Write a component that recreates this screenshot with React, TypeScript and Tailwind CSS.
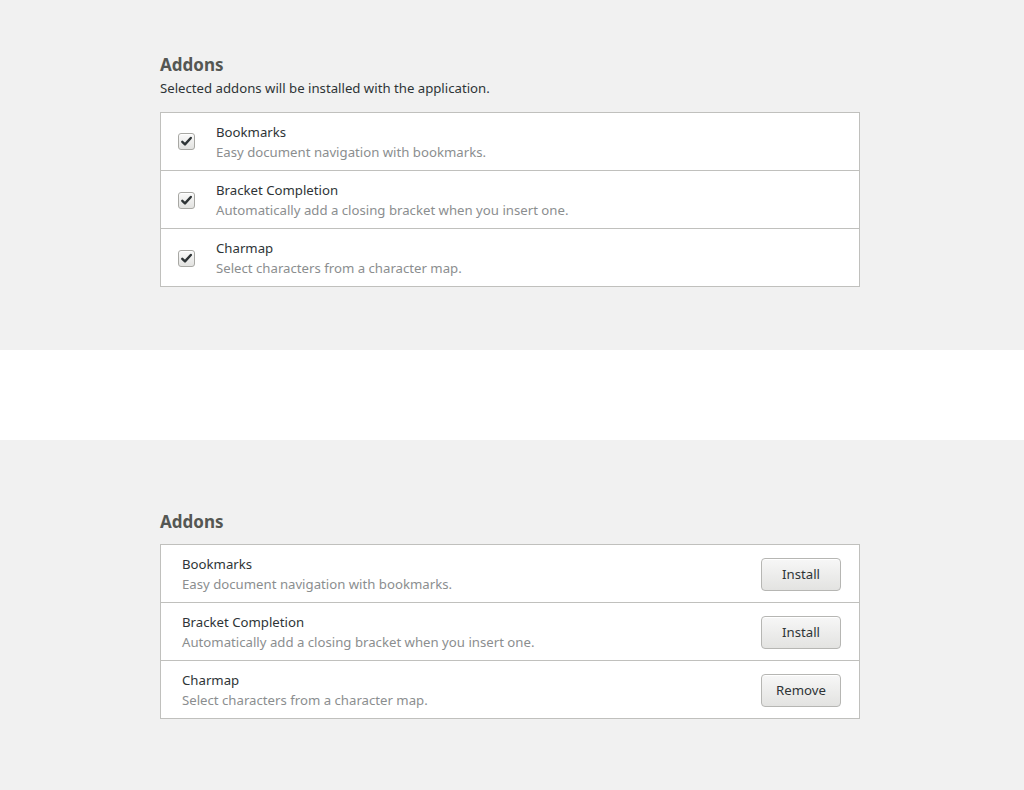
import React from 'react';

type Addon = { name: string; desc: string; action: string };

const addons: Addon[] = [
  { name: 'Bookmarks', desc: 'Easy document navigation with bookmarks.', action: 'Install' },
  { name: 'Bracket Completion', desc: 'Automatically add a closing bracket when you insert one.', action: 'Install' },
  { name: 'Charmap', desc: 'Select characters from a character map.', action: 'Remove' },
];

const Check: React.FC = () => (
  <span className="flex h-[17px] w-[17px] items-center justify-center rounded-[3px] border border-[#a8a8a4] bg-gradient-to-b from-[#fafafa] to-[#e2e2e0] shadow-[inset_0_1px_0_#fff]">
    <svg width="13" height="13" viewBox="0 0 13 13">
      <path d="M2.3 6.8 L5 9.4 L10.8 3" fill="none" stroke="#2e3436" strokeWidth="2.4" strokeLinecap="round" strokeLinejoin="round" />
    </svg>
  </span>
);

const App: React.FC = () => {
  return (
    <div className="min-h-screen text-[#2e3436]" style={{ fontFamily: '"Noto Sans", "Open Sans", sans-serif' }}>
      <section className="h-[350px] bg-[#f1f1f1] pl-[160px] pt-[54px]">
        <h2 className="text-[17px] font-bold leading-[22px] text-[#555753]">Addons</h2>
        <p className="mt-[3px] text-[13.2px] leading-[18px] text-[#2e3436]">Selected addons will be installed with the application.</p>
        <div className="mt-[15px] w-[700px] border border-[#c0c0bd] bg-white">
          {addons.map((a, i) => (
            <div key={a.name} className={`flex items-center ${i > 0 ? 'h-[58px] border-t border-[#c0c0bd] pt-[1px]' : 'h-[57px]'}`}>
              <div className="mr-[21px] pl-[17px]">
                <Check />
              </div>
              <div>
                <div className="text-[13.2px] leading-[20px]">{a.name}</div>
                <div className="text-[13.2px] leading-[20px] text-[#8b8e8f]">{a.desc}</div>
              </div>
            </div>
          ))}
        </div>
      </section>
      <section className="h-[90px] bg-white" />
      <section className="h-[350px] bg-[#f1f1f1] pl-[160px] pt-[71px]">
        <h2 className="text-[17px] font-bold leading-[22px] text-[#555753]">Addons</h2>
        <div className="mt-[11px] w-[700px] border border-[#c0c0bd] bg-white">
          {addons.map((a, i) => (
            <div key={a.name} className={`flex items-center justify-between pl-[21px] pr-[18px] ${i > 0 ? 'h-[58px] border-t border-[#c0c0bd]' : 'h-[57px]'}`}>
              <div>
                <div className="text-[13.2px] leading-[20px]">{a.name}</div>
                <div className="text-[13.2px] leading-[20px] text-[#8b8e8f]">{a.desc}</div>
              </div>
              <button className="mt-[2px] h-[33px] w-[80px] rounded-[4px] border border-[#b6b6b3] bg-gradient-to-b from-[#f7f7f7] to-[#e3e3e1] text-[13.2px] text-[#2e3436] shadow-[inset_0_1px_0_#fff]">
                {a.action}
              </button>
            </div>
          ))}
        </div>
      </section>
    </div>
  );
};

export default App;
